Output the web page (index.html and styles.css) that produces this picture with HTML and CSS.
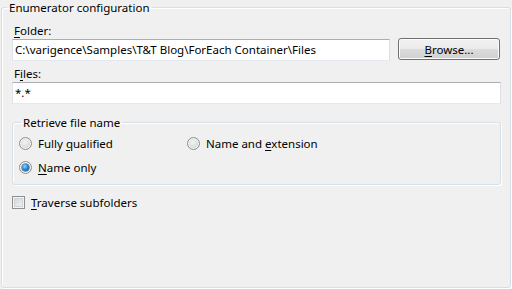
FILE: index.html
```html
<!DOCTYPE html>
<html>
<head>
<meta charset="utf-8">
<link rel="stylesheet" href="styles.css">
</head>
<body>
<fieldset class="group outer">
  <legend class="group-title">Enumerator configuration</legend>
  <div class="label"><u>F</u>older:</div>
  <div class="row">
    <div class="textbox grow">C:\varigence\Samples\T&amp;T Blog\ForEach Container\Files</div>
    <div class="button"><span><u>B</u>rowse...</span></div>
  </div>
  <div class="label files-label">F<u>i</u>les:</div>
  <div class="textbox">*.*</div>
  <fieldset class="group inner">
    <legend class="group-title inner-title">Retrieve file name</legend>
    <div class="radio-grid">
      <div class="option"><span class="radio"></span><span>Fully <u>q</u>ualified</span></div>
      <div class="option"><span class="radio"></span><span>Name and <u>e</u>xtension</span></div>
      <div class="option"><span class="radio checked"></span><span><u>N</u>ame only</span></div>
    </div>
  </fieldset>
  <div class="option check-row"><span class="checkbox"></span><span><u>T</u>raverse subfolders</span></div>
</fieldset>
</body>
</html>
```

FILE: styles.css
```css
html, body {
  margin: 0;
  padding: 0;
  background: #f0f0f0;
}
body {
  width: 512px;
  height: 289px;
  overflow: hidden;
  font-family: "Noto Sans", "Segoe UI", sans-serif;
  font-size: 11.5px;
  line-height: 15px;
  color: #000;
}
u {
  text-decoration: underline;
  text-underline-offset: 2px;
}
.group {
  margin: 0;
  border: 1px solid #d5dfe5;
  border-radius: 3px;
  box-shadow: inset 1px 1px 0 #fff, 1px 1px 0 #fff;
  min-width: 0;
}
.outer {
  box-sizing: border-box;
  width: 510px;
  height: 288px;
  margin-left: 1px;
  padding: 8px 9px 0 10px;
}
.group-title {
  padding: 0 2px;
  margin-left: -5px;
  line-height: 15px;
}
.label {
  height: 16px;
  line-height: 16px;
  padding-left: 2px;
}
.files-label {
  margin-top: 5px;
}
.row {
  display: flex;
  align-items: flex-start;
  gap: 8px;
}
.grow {
  flex: 1;
}
.textbox {
  box-sizing: border-box;
  height: 22px;
  border: 1px solid #dde1e6;
  border-top-color: #abadb3;
  border-left-color: #e2e3ea;
  border-right-color: #dbdfe6;
  border-bottom-color: #e3e9ef;
  background: #fff;
  padding: 2px 3px 0 2px;
  line-height: 16px;
  white-space: nowrap;
  overflow: hidden;
}
.button {
  box-sizing: border-box;
  width: 102px;
  height: 22px;
  margin-top: -1px;
  margin-right: 1px;
  border: 1px solid #707070;
  border-radius: 3px;
  background: linear-gradient(#f2f2f2 0%, #ebebeb 50%, #dddddd 50%, #cfcfcf 100%);
  box-shadow: inset 0 0 0 1px #fcfcfc;
  display: flex;
  align-items: center;
  justify-content: center;
  line-height: 15px;
}
.inner {
  box-sizing: border-box;
  height: 70px;
  margin: 11px 0 0 0;
  padding: 6px 10px 0 6px;
}
.inner-title {
  margin-left: 2px;
}
.radio-grid {
  display: grid;
  grid-template-columns: 168px 1fr;
  row-gap: 9px;
}
.option {
  display: flex;
  align-items: center;
  gap: 6px;
  height: 15px;
}
.radio {
  box-sizing: border-box;
  width: 13px;
  height: 13px;
  border-radius: 50%;
  border: 1px solid #8e8f8f;
  background: radial-gradient(circle at 45% 40%, #f4f4f4 0%, #dcdcdc 55%, #c8c8c8 100%);
  box-shadow: inset 0 0 0 1px #f6f6f6;
  position: relative;
  flex: none;
}
.radio.checked::after {
  content: "";
  position: absolute;
  left: 2px;
  top: 2px;
  width: 7px;
  height: 7px;
  border-radius: 50%;
  background: radial-gradient(circle at 40% 35%, #8fdcff 0%, #2b8ad6 45%, #0d3f7a 100%);
  box-shadow: 0 0 0 0.5px #1a4f8a;
}
.check-row {
  margin-top: 10px;
  height: 15px;
}
.checkbox {
  box-sizing: border-box;
  width: 13px;
  height: 13px;
  border: 1px solid #8e8f8f;
  background: linear-gradient(135deg, #cbcfd5 0%, #f6f6f6 100%);
  box-shadow: inset 0 0 0 1px #f4f4f4, inset 0 0 0 2px #cfd2d6;
  flex: none;
}
```
